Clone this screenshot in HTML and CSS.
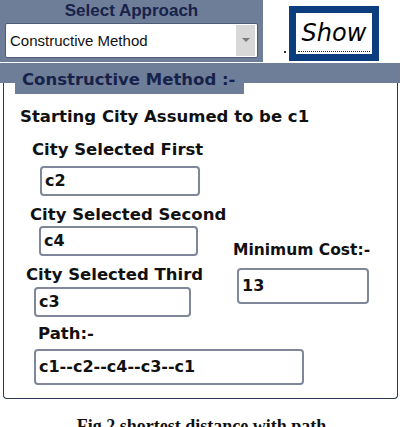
FILE: index.html
```html
<!DOCTYPE html>
<html lang="en">
<head>
    <meta charset="UTF-8">
    <meta name="viewport" content="width=device-width, initial-scale=1.0">
    <title>Constructive Method</title>
    <link rel="stylesheet" href="styles.css">
</head>
<body>
    <div class="top">
        <div class="approach">
            <h2>Select Approach</h2>
            <div class="select">
                <span>Constructive Method</span>
                <span class="arrow"></span>
            </div>
        </div>
        <div class="show-wrap">
            <span class="dot"></span>
            <button type="button" class="show"><span>Show</span></button>
        </div>
    </div>

    <div class="band">
        <div class="tab">Constructive Method :-</div>
    </div>

    <div class="panel">
        <p class="start">Starting City Assumed to be c1</p>

        <label class="first">City Selected First</label>
        <div class="field f-first">c2</div>

        <div class="middle">
            <div class="left">
                <label class="second">City Selected Second</label>
                <div class="field f-second">c4</div>
                <label class="third">City Selected Third</label>
                <div class="field f-third">c3</div>
            </div>
            <div class="right">
                <label class="cost">Minimum Cost:-</label>
                <div class="field f-cost">13</div>
            </div>
        </div>

        <label class="path">Path:-</label>
        <div class="field f-path">c1--c2--c4--c3--c1</div>
    </div>

    <p class="caption">Fig.2 shortest distance with path</p>
</body>
</html>
```

FILE: styles.css
```css
/* Reset some default styles */
* {
    box-sizing: border-box;
}

body, h2, p, button {
    margin: 0;
    padding: 0;
}

body {
    font-family: "DejaVu Sans", Verdana, sans-serif;
    background-color: #ffffff;
    width: 403px;
    height: 427px;
    overflow: hidden;
}

/* top strip: approach picker + show button */
.top {
    display: flex;
    height: 62px;
}

.approach {
    width: 263px;
    background-color: #6e7d98;
    padding: 1px 5px 0 5px;
}

.approach h2 {
    text-align: center;
    font-family: "Liberation Sans", Arial, sans-serif;
    font-size: 17px;
    line-height: 20px;
    color: #17224a;
}

.select {
    display: flex;
    align-items: center;
    justify-content: space-between;
    height: 35px;
    margin-top: 2px;
    background-color: #fff;
    border: 1px solid #4f5b72;
    border-radius: 2px;
    padding-left: 4px;
    font-family: "Liberation Sans", Arial, sans-serif;
    font-size: 15px;
    color: #111;
}

.select .arrow {
    width: 19px;
    height: 31px;
    margin-right: 2px;
    background-color: #d8d8d8;
    position: relative;
}

.select .arrow::after {
    content: "";
    position: absolute;
    left: 6px;
    top: 13px;
    border-left: 4px solid transparent;
    border-right: 4px solid transparent;
    border-top: 4px solid #7a7a7a;
}

.show-wrap {
    display: flex;
    align-items: flex-end;
    padding: 6px 0 1px 21px;
}

.dot {
    width: 2px;
    height: 2px;
    background-color: #333;
    margin: 0 3px 8px 0;
}

.show {
    width: 90px;
    height: 55px;
    border: 7px solid #0c3d7e;
    background-color: #fff;
    font-family: "DejaVu Sans", Verdana, sans-serif;
    font-size: 24px;
    font-style: italic;
    color: #000;
    padding: 0;
}

.show span {
    display: block;
    margin: 0 2px;
    line-height: 35px;
    border-bottom: 1px dotted #222;
}

/* group box heading */
.band {
    height: 20px;
    margin-top: 1px;
    margin-right: 3px;
    background-color: #6e7d98;
    position: relative;
}

.tab {
    position: absolute;
    left: 15px;
    top: 0;
    width: 229px;
    height: 31px;
    padding: 7px 0 0 7px;
    background-color: #6e7d98;
    color: #17224a;
    font-weight: bold;
    font-size: 16.5px;
    line-height: 20px;
    z-index: 1;
}

.panel {
    height: 316px;
    margin: 0 5px 0 3px;
    border: 1px solid #2b3652;
    border-top: none;
    border-radius: 0 0 4px 4px;
    padding: 24px 0 0 16px;
    font-weight: bold;
    color: #111;
}

.start {
    font-size: 16.5px;
    line-height: 20px;
}

label {
    display: block;
    font-size: 16.5px;
    line-height: 20px;
    white-space: nowrap;
}

.field {
    height: 30px;
    border: 2px solid #80879a;
    border-radius: 4px;
    background-color: #fff;
    padding-left: 3px;
    font-size: 16px;
    line-height: 26px;
}

.first {
    margin: 13px 0 0 12px;
}

.f-first {
    width: 160px;
    margin: 6px 0 0 20px;
}

.middle {
    display: flex;
}

.left {
    width: 194px;
}

.second {
    margin: 9px 0 0 10px;
}

.f-second {
    width: 159px;
    margin: 1px 0 0 19px;
}

.third {
    margin: 9px 0 0 6px;
}

.f-third {
    width: 157px;
    margin: 2px 0 0 14px;
}

.right {
    margin-left: 19px;
    padding-top: 44px;
}

.cost {
    font-size: 15.5px;
}

.f-cost {
    width: 132px;
    height: 36px;
    line-height: 32px;
    margin: 8px 0 0 4px;
}

.path {
    margin: 7px 0 0 18px;
}

.f-path {
    width: 270px;
    height: 36px;
    line-height: 32px;
    margin: 5px 0 0 14px;
}

.caption {
    font-family: "Liberation Serif", "Times New Roman", serif;
    font-weight: bold;
    font-size: 18px;
    line-height: 20px;
    text-align: center;
    margin-top: 17px;
    color: #111;
}
```
